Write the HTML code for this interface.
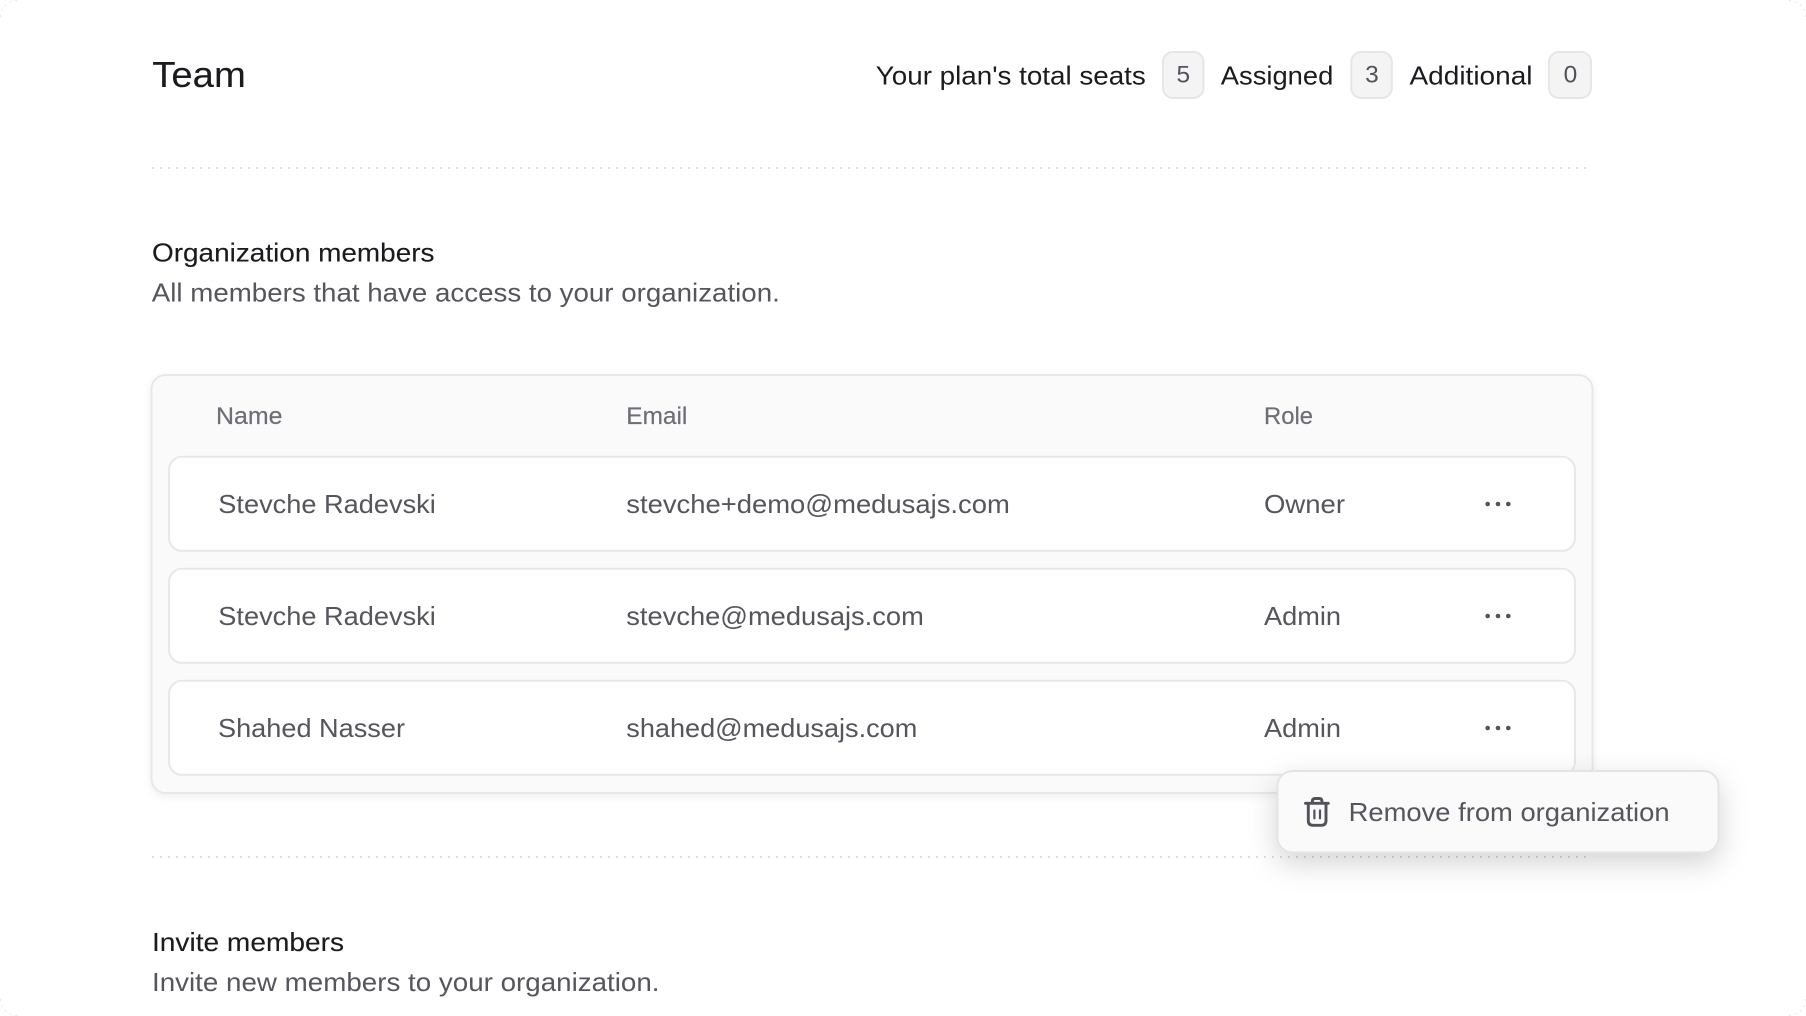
<!DOCTYPE html>
<html lang="en">
<head>
<meta charset="utf-8">
<title>Team</title>
<style>
html,body{margin:0;padding:0;background:#fff;width:1806px;height:1016px;overflow:hidden}
svg{display:block;position:absolute;left:0;top:0}
text{font-family:"Liberation Sans",sans-serif;white-space:pre}
.d{fill:#1b1b1f;stroke:#1b1b1f;stroke-width:.12}
.g{fill:#55555e;font-size:26px}
.h{fill:#6e6e76;font-size:24px;stroke:#6e6e76;stroke-width:.2}
.row{fill:#fff;stroke:#e8e8ea;stroke-width:2}
.b{fill:#f4f4f5;stroke:#e6e6e8;stroke-width:2}
.n{fill:#52525b;font-size:24.500px;text-anchor:middle}
</style>
</head>
<body>
<svg width="1806" height="1016" viewBox="0 0 1806 1016" xmlns="http://www.w3.org/2000/svg">
<defs>
<pattern id="dots" x="152" y="0" width="8" height="2" patternUnits="userSpaceOnUse"><rect width="2" height="2" fill="#dedee0"/></pattern>
<filter id="cs" x="-5%" y="-5%" width="110%" height="115%"><feDropShadow dx="0" dy="3" stdDeviation="4" flood-color="#000" flood-opacity=".06"/></filter>
<filter id="ps" x="-15%" y="-40%" width="130%" height="200%"><feDropShadow dx="0" dy="10" stdDeviation="14" flood-color="#000" flood-opacity=".17"/></filter>
</defs>

<g fill="none" stroke="#e8e8ea" stroke-width="1" stroke-dasharray="2 4">
<path d="M.5 17A16.5 16.5 0 0 1 17 .5"/>
<path d="M1805.500 17A16.500 16.500 0 0 0 1789 .5"/>
<path d="M.5 999A16.500 16.500 0 0 0 17 1015.500"/>
<path d="M1805.500 999A16.500 16.500 0 0 1 1789 1015.500"/>
</g>

<text class="d" x="152.300" y="87" font-size="36" textLength="93.500" lengthAdjust="spacingAndGlyphs">Team</text>

<text class="d" x="875.800" y="84.300" font-size="26" textLength="270" lengthAdjust="spacingAndGlyphs" style="stroke-width:0">Your plan's total seats</text>
<rect class="b" x="1163" y="52" width="40.500" height="46" rx="10"/>
<text class="n" x="1183.300" y="82.300">5</text>
<text class="d" x="1220.800" y="84.300" font-size="26" textLength="112.500" lengthAdjust="spacingAndGlyphs" style="stroke-width:0">Assigned</text>
<rect class="b" x="1351.300" y="52" width="40.500" height="46" rx="10"/>
<text class="n" x="1372" y="82.300">3</text>
<text class="d" x="1409.500" y="84.300" font-size="26" textLength="123" lengthAdjust="spacingAndGlyphs" style="stroke-width:0">Additional</text>
<rect class="b" x="1549" y="52" width="42" height="46" rx="10"/>
<text class="n" x="1570.500" y="82.300">0</text>

<rect x="152" y="167" width="1434" height="2" fill="url(#dots)"/>

<text class="d" x="152" y="261.700" font-size="26" textLength="282.500" lengthAdjust="spacingAndGlyphs">Organization members</text>
<text class="g" x="151.800" y="301.700" textLength="628" lengthAdjust="spacingAndGlyphs">All members that have access to your organization.</text>

<rect x="151.500" y="375" width="1441" height="418" rx="14" fill="#fafafa" stroke="#e8e8ea" stroke-width="2" filter="url(#cs)"/>

<text class="h" x="216" y="424" textLength="66.500" lengthAdjust="spacingAndGlyphs">Name</text>
<text class="h" x="626.300" y="424" textLength="61" lengthAdjust="spacingAndGlyphs">Email</text>
<text class="h" x="1264" y="424" textLength="49" lengthAdjust="spacingAndGlyphs">Role</text>

<rect class="row" x="169" y="456.800" width="1406" height="94" rx="13"/>
<rect class="row" x="169" y="568.800" width="1406" height="94" rx="13"/>
<rect class="row" x="169" y="680.800" width="1406" height="94" rx="13"/>

<text class="g" x="218.300" y="513" textLength="217.500" lengthAdjust="spacingAndGlyphs">Stevche Radevski</text>
<text class="g" x="626.300" y="513" textLength="383.500" lengthAdjust="spacingAndGlyphs">stevche+demo@medusajs.com</text>
<text class="g" x="1264" y="513" textLength="81" lengthAdjust="spacingAndGlyphs">Owner</text>

<text class="g" x="218.300" y="625" textLength="217.500" lengthAdjust="spacingAndGlyphs">Stevche Radevski</text>
<text class="g" x="626.300" y="625" textLength="297.500" lengthAdjust="spacingAndGlyphs">stevche@medusajs.com</text>
<text class="g" x="1264" y="625" textLength="77" lengthAdjust="spacingAndGlyphs">Admin</text>

<text class="g" x="218" y="737" textLength="187" lengthAdjust="spacingAndGlyphs">Shahed Nasser</text>
<text class="g" x="626.300" y="737" textLength="291" lengthAdjust="spacingAndGlyphs">shahed@medusajs.com</text>
<text class="g" x="1264" y="737" textLength="77" lengthAdjust="spacingAndGlyphs">Admin</text>

<g fill="#52525b">
<circle cx="1487.700" cy="504" r="2.300"/><circle cx="1498" cy="504" r="2.300"/><circle cx="1508.300" cy="504" r="2.300"/>
<circle cx="1487.700" cy="616" r="2.300"/><circle cx="1498" cy="616" r="2.300"/><circle cx="1508.300" cy="616" r="2.300"/>
<circle cx="1487.700" cy="728" r="2.300"/><circle cx="1498" cy="728" r="2.300"/><circle cx="1508.300" cy="728" r="2.300"/>
</g>

<rect x="152" y="856" width="1434" height="2" fill="url(#dots)"/>

<text class="d" x="152" y="951" font-size="26" textLength="192" lengthAdjust="spacingAndGlyphs">Invite members</text>
<text class="g" x="152" y="991" textLength="507.500" lengthAdjust="spacingAndGlyphs">Invite new members to your organization.</text>

<rect x="1277.500" y="771" width="441" height="81.500" rx="15" fill="#fafafa" stroke="#e4e4e6" stroke-width="2" filter="url(#ps)"/>
<g fill="none" stroke="#52525b" stroke-width="2.900" stroke-linecap="round" stroke-linejoin="round">
<path d="M1305.500 803.300H1328.300"/>
<path d="M1312.300 803V801.500Q1312.300 798.500 1315.300 798.500H1319Q1322 798.500 1322 801.500V803"/>
<path d="M1308.300 803.500V820.500Q1308.300 825.300 1313 825.300H1321.300Q1326 825.300 1326 820.500V803.500"/>
</g>
<g fill="none" stroke="#52525b" stroke-width="2.200" stroke-linecap="round">
<path d="M1314.400 810.500V818.300"/>
<path d="M1320 810.500V818.300"/>
</g>
<text class="g" x="1348.600" y="821" textLength="321" lengthAdjust="spacingAndGlyphs">Remove from organization</text>
</svg>
</body>
</html>
